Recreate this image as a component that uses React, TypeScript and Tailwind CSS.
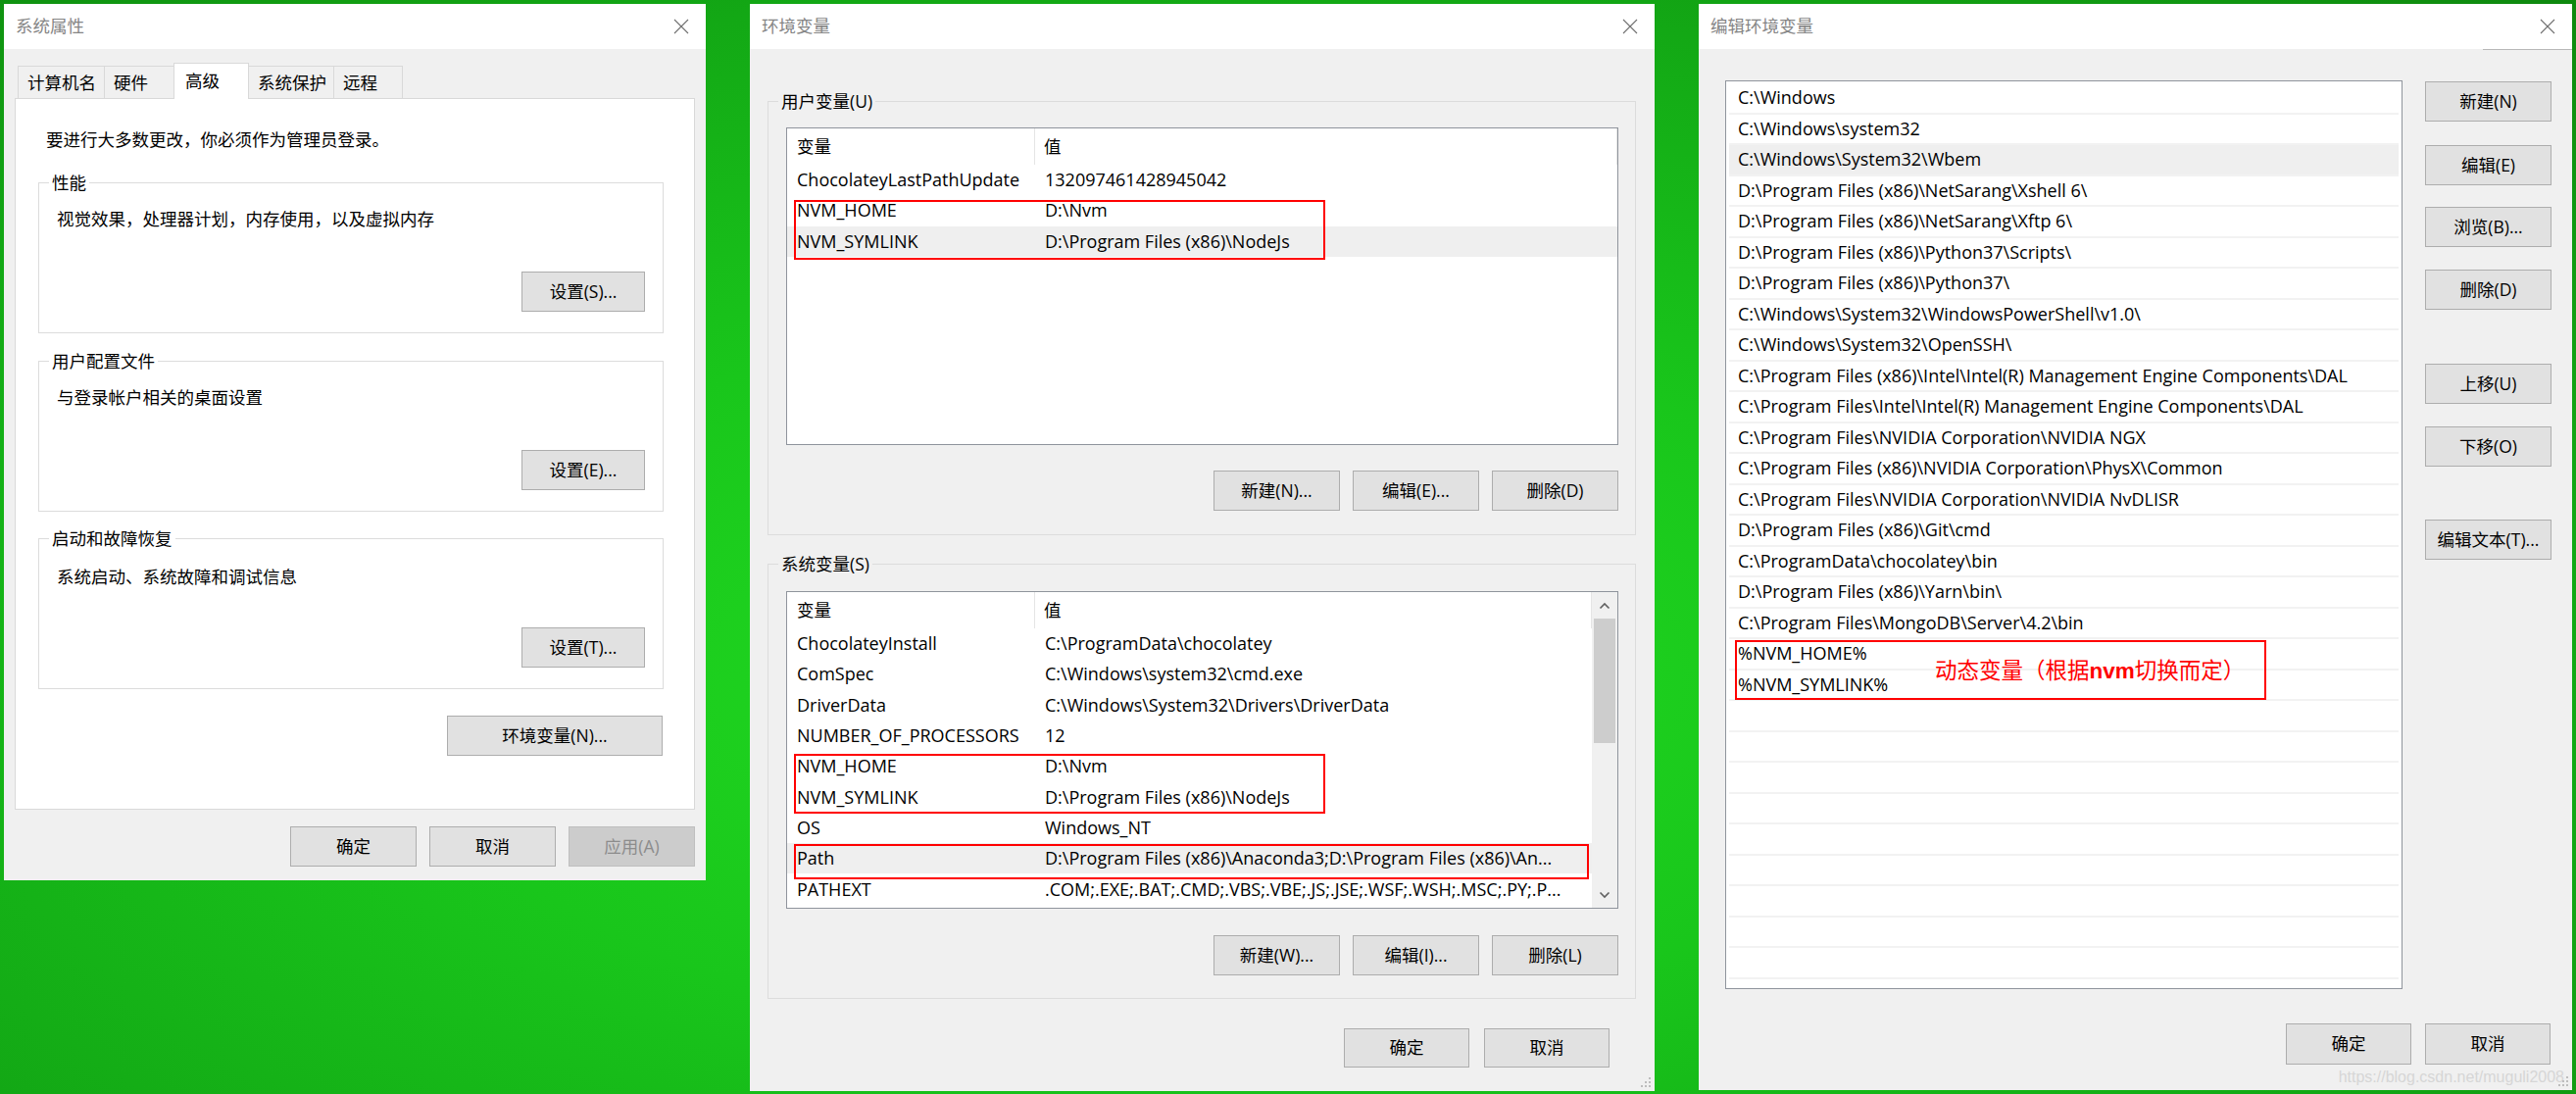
import React from "react";

function XIcon() {
  return (
    <svg width="16" height="16" viewBox="0 0 16 16" className="shrink-0">
      <path d="M1 1L15 15M15 1L1 15" stroke="#6f6f6f" strokeWidth="1.1" fill="none" />
    </svg>
  );
}

function TitleBar({ title }: { title: string }) {
  return (
    <div className="flex h-[46px] shrink-0 items-center justify-between bg-white pl-[12px] pr-[17px]">
      <span className="text-[17.5px] leading-none text-[#858585]">{title}</span>
      <XIcon />
    </div>
  );
}

function Btn({
  children,
  className = "",
  disabled,
}: {
  children: React.ReactNode;
  className?: string;
  disabled?: boolean;
}) {
  return (
    <div
      className={
        "flex shrink-0 items-center justify-center border text-[17.5px] leading-none " +
        (disabled ? "border-[#bfbfbf] bg-[#cccccc] text-[#8c8c8c] " : "border-[#adadad] bg-[#e1e1e1] text-black ") +
        className
      }
    >
      {children}
    </div>
  );
}

function Grip() {
  return (
    <svg width="10" height="10" viewBox="0 0 10 10" className="absolute bottom-[4px] right-[4px]">
      {[
        [8, 0],
        [8, 4],
        [4, 4],
        [8, 8],
        [4, 8],
        [0, 8],
      ].map(([x, y], i) => (
        <rect key={i} x={x} y={y} width="2" height="2" fill="#bdbdbd" />
      ))}
    </svg>
  );
}

function GroupBox({
  label,
  desc,
  btn,
  descTop,
}: {
  label: string;
  desc: string;
  btn: string;
  descTop: string;
}) {
  return (
    <div className="relative flex h-[154px] shrink-0 flex-col border border-[#dcdcdc] px-[18px]">
      <div className="absolute -top-[13px] left-[10px] bg-white px-[3px] leading-[24px]">{label}</div>
      <div className={"h-[24px] leading-[24px] " + descTop}>{desc}</div>
      <Btn className="mt-auto mb-[21px] h-[41px] w-[126px] self-end">{btn}</Btn>
    </div>
  );
}

function Window1() {
  const tabs = [
    { t: "计算机名", w: "w-[89px]", first: true },
    { t: "硬件", w: "w-[72px]" },
    { t: "高级", w: "w-[77px]", sel: true },
    { t: "系统保护", w: "w-[88px]" },
    { t: "远程", w: "w-[71px]" },
  ];
  return (
    <div className="flex h-[894px] w-[716px] shrink-0 flex-col bg-[#f0f0f0]">
      <TitleBar title="系统属性" />
      <div className="mt-[14px] ml-[14px] flex h-[36px] items-end">
        {tabs.map((tab) =>
          tab.sel ? (
            <div
              key={tab.t}
              className={
                "relative z-10 -mb-px -ml-px flex h-[37px] items-center border-x border-t border-[#d9d9d9] bg-white pb-[2px] pl-[11px] " +
                tab.w
              }
            >
              {tab.t}
            </div>
          ) : (
            <div
              key={tab.t}
              className={
                "flex h-[33px] items-center border-x border-t border-[#d9d9d9] bg-[#f0f0f0] pl-[9px] " +
                (tab.first ? "" : "-ml-px ") +
                tab.w
              }
            >
              {tab.t}
            </div>
          )
        )}
      </div>
      <div className="mx-[11px] flex h-[726px] shrink-0 flex-col border border-[#d9d9d9] bg-white pl-[23px] pr-[31px]">
        <div className="mt-[29px] ml-[8px] h-[24px] leading-[24px]">要进行大多数更改，你必须作为管理员登录。</div>
        <div className="mt-[32px]">
          <GroupBox label="性能" desc="视觉效果，处理器计划，内存使用，以及虚拟内存" btn="设置(S)..." descTop="mt-[24px]" />
        </div>
        <div className="mt-[28px]">
          <GroupBox label="用户配置文件" desc="与登录帐户相关的桌面设置" btn="设置(E)..." descTop="mt-[24px]" />
        </div>
        <div className="mt-[27px]">
          <GroupBox label="启动和故障恢复" desc="系统启动、系统故障和调试信息" btn="设置(T)..." descTop="mt-[26px]" />
        </div>
        <Btn className="mt-[27px] mr-[1px] h-[41px] w-[220px] self-end">环境变量(N)...</Btn>
      </div>
      <div className="mt-[17px] flex justify-end gap-[13px] pr-[11px]">
        <Btn className="h-[41px] w-[129px]">确定</Btn>
        <Btn className="h-[41px] w-[129px]">取消</Btn>
        <Btn className="h-[41px] w-[129px]" disabled>
          应用(A)
        </Btn>
      </div>
    </div>
  );
}

type Row = { n: string; v: string; hl?: boolean };

function Chevron({ up }: { up?: boolean }) {
  return (
    <svg width="12" height="8" viewBox="0 0 12 8">
      <path d={up ? "M1.5 6.5L6 2L10.5 6.5" : "M1.5 1.5L6 6L10.5 1.5"} stroke="#606060" strokeWidth="1.6" fill="none" />
    </svg>
  );
}

function VarList({
  rows,
  scroll,
  boxes,
}: {
  rows: Row[];
  scroll?: boolean;
  boxes: { cls: string }[];
}) {
  return (
    <div className="relative flex h-[324px] shrink-0 border border-[#8f949c] bg-white">
      <div className="flex min-w-0 flex-1 flex-col overflow-hidden">
        <div className="flex h-[37px] shrink-0 items-stretch">
          <div className="flex w-[253px] shrink-0 items-center border-r border-[#e5e5e5] pl-[10px]">变量</div>
          <div className="flex flex-1 items-center border-r border-[#e5e5e5] pl-[9px]">值</div>
        </div>
        {rows.map((r) => (
          <div
            key={r.n}
            className={
              "flex h-[31.3px] shrink-0 items-center whitespace-nowrap text-[18px] " + (r.hl ? "bg-[#efefef]" : "")
            }
          >
            <div className="w-[253px] shrink-0 overflow-hidden pl-[10px]">{r.n}</div>
            <div className="min-w-0 flex-1 overflow-hidden pl-[10px]">{r.v}</div>
          </div>
        ))}
      </div>
      {scroll && (
        <div className="flex w-[26px] shrink-0 flex-col bg-[#f0f0f0]">
          <div className="flex h-[27px] items-center justify-center">
            <Chevron up />
          </div>
          <div className="mx-[2px] h-[127px] bg-[#cdcdcd]" />
          <div className="flex-1" />
          <div className="flex h-[27px] items-center justify-center">
            <Chevron />
          </div>
        </div>
      )}
      {boxes.map((b, i) => (
        <div key={i} className={"pointer-events-none absolute left-[7px] border-2 border-[#ff0000] " + b.cls} />
      ))}
    </div>
  );
}

function Window2() {
  const userRows: Row[] = [
    { n: "ChocolateyLastPathUpdate", v: "132097461428945042" },
    { n: "NVM_HOME", v: "D:\\Nvm" },
    { n: "NVM_SYMLINK", v: "D:\\Program Files (x86)\\NodeJs", hl: true },
  ];
  const sysRows: Row[] = [
    { n: "ChocolateyInstall", v: "C:\\ProgramData\\chocolatey" },
    { n: "ComSpec", v: "C:\\Windows\\system32\\cmd.exe" },
    { n: "DriverData", v: "C:\\Windows\\System32\\Drivers\\DriverData" },
    { n: "NUMBER_OF_PROCESSORS", v: "12" },
    { n: "NVM_HOME", v: "D:\\Nvm" },
    { n: "NVM_SYMLINK", v: "D:\\Program Files (x86)\\NodeJs" },
    { n: "OS", v: "Windows_NT" },
    { n: "Path", v: "D:\\Program Files (x86)\\Anaconda3;D:\\Program Files (x86)\\An...", hl: true },
    { n: "PATHEXT", v: ".COM;.EXE;.BAT;.CMD;.VBS;.VBE;.JS;.JSE;.WSF;.WSH;.MSC;.PY;.P..." },
  ];
  return (
    <div className="relative flex h-[1109px] w-[923px] shrink-0 flex-col bg-[#f0f0f0]">
      <TitleBar title="环境变量" />
      <div className="relative mt-[53px] ml-[18px] mr-[19px] flex h-[443px] shrink-0 flex-col border border-[#dcdcdc] pl-[18px] pr-[17px]">
        <div className="absolute -top-[13px] left-[10px] bg-[#f0f0f0] px-[3px] leading-[24px]">用户变量(U)</div>
        <div className="mt-[26px]">
          <VarList rows={userRows} boxes={[{ cls: "top-[73px] h-[61px] w-[542px]" }]} />
        </div>
        <div className="mt-[26px] flex justify-end gap-[13px]">
          <Btn className="h-[41px] w-[129px]">新建(N)...</Btn>
          <Btn className="h-[41px] w-[129px]">编辑(E)...</Btn>
          <Btn className="h-[41px] w-[129px]">删除(D)</Btn>
        </div>
      </div>
      <div className="relative mt-[29px] ml-[18px] mr-[19px] flex h-[444px] shrink-0 flex-col border border-[#dcdcdc] pl-[18px] pr-[17px]">
        <div className="absolute -top-[13px] left-[10px] bg-[#f0f0f0] px-[3px] leading-[24px]">系统变量(S)</div>
        <div className="mt-[27px]">
          <VarList
            rows={sysRows}
            scroll
            boxes={[{ cls: "top-[165px] h-[61px] w-[542px]" }, { cls: "top-[257px] h-[36px] w-[811px]" }]}
          />
        </div>
        <div className="mt-[27px] flex justify-end gap-[13px]">
          <Btn className="h-[41px] w-[129px]">新建(W)...</Btn>
          <Btn className="h-[41px] w-[129px]">编辑(I)...</Btn>
          <Btn className="h-[41px] w-[129px]">删除(L)</Btn>
        </div>
      </div>
      <div className="mt-[30px] flex justify-end gap-[15px] pr-[46px]">
        <Btn className="h-[40px] w-[128px]">确定</Btn>
        <Btn className="h-[40px] w-[128px]">取消</Btn>
      </div>
      <Grip />
    </div>
  );
}

function Window3() {
  const paths = [
    "C:\\Windows",
    "C:\\Windows\\system32",
    "C:\\Windows\\System32\\Wbem",
    "D:\\Program Files (x86)\\NetSarang\\Xshell 6\\",
    "D:\\Program Files (x86)\\NetSarang\\Xftp 6\\",
    "D:\\Program Files (x86)\\Python37\\Scripts\\",
    "D:\\Program Files (x86)\\Python37\\",
    "C:\\Windows\\System32\\WindowsPowerShell\\v1.0\\",
    "C:\\Windows\\System32\\OpenSSH\\",
    "C:\\Program Files (x86)\\Intel\\Intel(R) Management Engine Components\\DAL",
    "C:\\Program Files\\Intel\\Intel(R) Management Engine Components\\DAL",
    "C:\\Program Files\\NVIDIA Corporation\\NVIDIA NGX",
    "C:\\Program Files (x86)\\NVIDIA Corporation\\PhysX\\Common",
    "C:\\Program Files\\NVIDIA Corporation\\NVIDIA NvDLISR",
    "D:\\Program Files (x86)\\Git\\cmd",
    "C:\\ProgramData\\chocolatey\\bin",
    "D:\\Program Files (x86)\\Yarn\\bin\\",
    "C:\\Program Files\\MongoDB\\Server\\4.2\\bin",
    "%NVM_HOME%",
    "%NVM_SYMLINK%",
  ];
  const rows = [...paths, ...Array.from({ length: 10 }, () => "")];
  return (
    <div className="relative flex h-[1108px] w-[891px] shrink-0 flex-col bg-[#f0f0f0]">
      <TitleBar title="编辑环境变量" />
      <div className="absolute right-0 top-[46px] h-px w-[91px] bg-[#b8b8b8]" />
      <div className="mt-[32px] flex pl-[27px]">
        <div className="relative h-[927px] w-[691px] shrink-0 overflow-hidden border border-[#8f949c] bg-white pt-[2px] text-[18px]">
          {rows.map((p, i) => (
            <div
              key={i}
              className={
                "mx-[3px] flex h-[31.5px] items-center whitespace-nowrap border-b-2 border-[#f2f2f2] pl-[9px] " +
                (i === 2 ? "bg-[#efefef]" : "")
              }
            >
              {p}
            </div>
          ))}
          <div className="absolute left-[9px] top-[570px] flex h-[61px] w-[542px] items-center border-2 border-[#ff0000] pl-[202px]">
            <span className="whitespace-nowrap text-[22.5px] leading-none text-[#ff0000] [font-family:'Noto_Sans_CJK_SC',sans-serif]">
              动态变量（根据
              <span className="font-bold [font-family:'Liberation_Sans',sans-serif]">nvm</span>
              切换而定）
            </span>
          </div>
        </div>
        <div className="ml-[23px] mt-[1px] flex w-[129px] flex-col">
          <Btn className="h-[41px] w-[129px]">新建(N)</Btn>
          <Btn className="mt-[24px] h-[41px] w-[129px]">编辑(E)</Btn>
          <Btn className="mt-[22px] h-[41px] w-[129px]">浏览(B)...</Btn>
          <Btn className="mt-[23px] h-[41px] w-[129px]">删除(D)</Btn>
          <Btn className="mt-[55px] h-[41px] w-[129px]">上移(U)</Btn>
          <Btn className="mt-[23px] h-[41px] w-[129px]">下移(O)</Btn>
          <Btn className="mt-[54px] h-[41px] w-[129px]">编辑文本(T)...</Btn>
        </div>
      </div>
      <div className="mt-[35px] flex justify-end gap-[14px] pr-[22px]">
        <Btn className="h-[42px] w-[128px]">确定</Btn>
        <Btn className="h-[42px] w-[128px]">取消</Btn>
      </div>
      <div className="absolute bottom-[5px] right-[8px] whitespace-nowrap text-[16px] leading-none text-[#d6d6d6] [font-family:'Liberation_Sans',sans-serif]">
        https://blog.csdn.net/muguli2008
      </div>
      <Grip />
    </div>
  );
}

export default function App() {
  return (
    <div className="flex h-[1116px] w-[2628px] items-start gap-[45px] overflow-hidden bg-[radial-gradient(ellipse_at_45%_62%,#22dc22_0%,#19c61b_38%,#13a815_72%,#0e880e_100%)] pl-[4px] pt-[4px] text-[17.5px] text-black [font-family:'Open_Sans','Noto_Sans_CJK_SC',sans-serif]">
      <Window1 />
      <Window2 />
      <Window3 />
    </div>
  );
}
